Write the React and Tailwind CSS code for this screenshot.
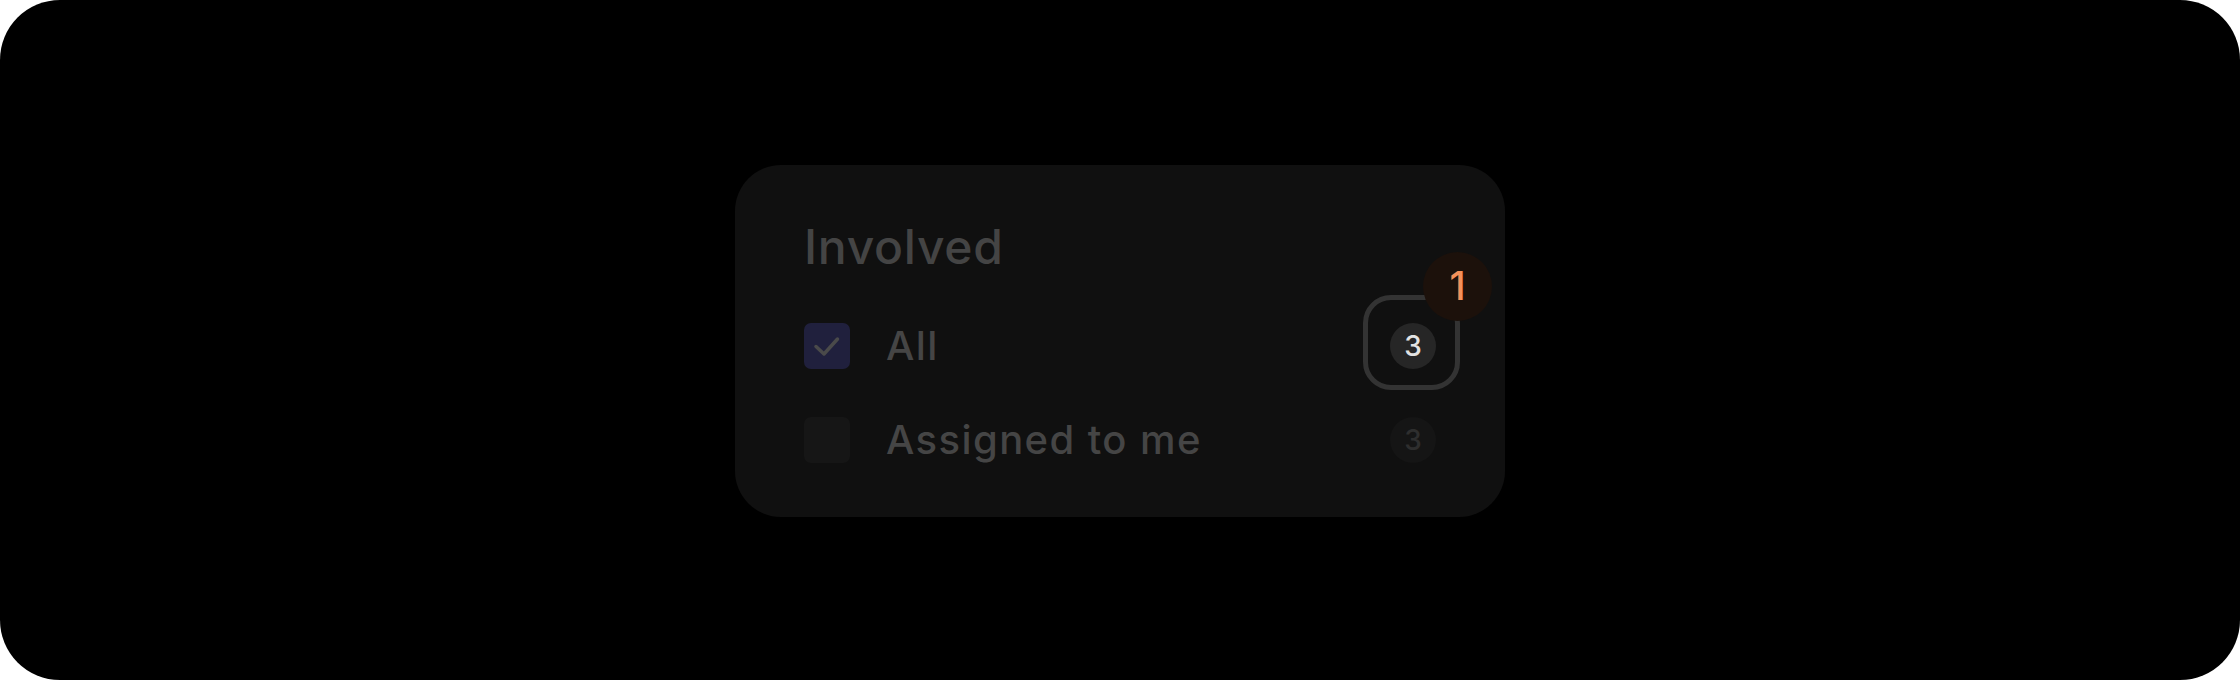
import React from 'react';

const font = { fontFamily: 'Inter, "Noto Sans", sans-serif' };

const Row = ({ label, checked, count, focused }) => (
  <div className="flex h-[94px] items-center justify-between">
    <div className="flex items-center gap-[36px]">
      {checked ? (
        <div className="flex h-[46px] w-[46px] items-center justify-center rounded-[7px] bg-[#20203d]">
          <svg width="30" height="24" viewBox="0 0 30 24" fill="none">
            <path d="M4 12.5l8 7.5L25.5 5" stroke="#4a4a4a" strokeWidth="3.5" strokeLinecap="round" strokeLinejoin="round" />
          </svg>
        </div>
      ) : (
        <div className="h-[46px] w-[46px] rounded-[7px] bg-[#161616]" />
      )}
      <span className="text-[40px] font-medium leading-none tracking-[0.035em] text-[#454545]">{label}</span>
    </div>
    <div className="relative">
      {focused && (
        <>
          <div className="absolute top-[-28px] left-[-27px] right-[-24px] bottom-[-21px] rounded-[28px] border-[5px] border-[#333333]" />
          <div className="absolute left-[33px] top-[-71px] flex h-[69px] w-[69px] items-center justify-center rounded-full bg-[#1c110b] text-[39px] font-medium text-[#f4915a]">
            1
          </div>
        </>
      )}
      <div
        className={
          focused
            ? 'flex h-[46px] w-[46px] items-center justify-center rounded-full bg-[#262626] text-[28px] font-medium text-[#e2e2e2]'
            : 'flex h-[46px] w-[46px] items-center justify-center rounded-full bg-[#151515] text-[28px] font-medium text-[#2e2e2e]'
        }
      >
        {count}
      </div>
    </div>
  </div>
);

export default function App() {
  return (
    <div className="bg-white" style={font}>
      <div className="flex h-[680px] w-full items-start justify-center rounded-[60px] bg-black pt-[165px]">
        <div className="flex w-[770px] flex-col rounded-[46px] bg-[#101010] px-[69px] pt-[53px] pb-[30px]">
          <h2 className="text-[48px] font-medium leading-[58px] tracking-[0.015em] text-[#444444]">Involved</h2>
          <div className="mt-[23px] flex flex-col">
            <Row label="All" checked count={3} focused />
            <Row label="Assigned to me" count={3} />
          </div>
        </div>
      </div>
    </div>
  );
}
